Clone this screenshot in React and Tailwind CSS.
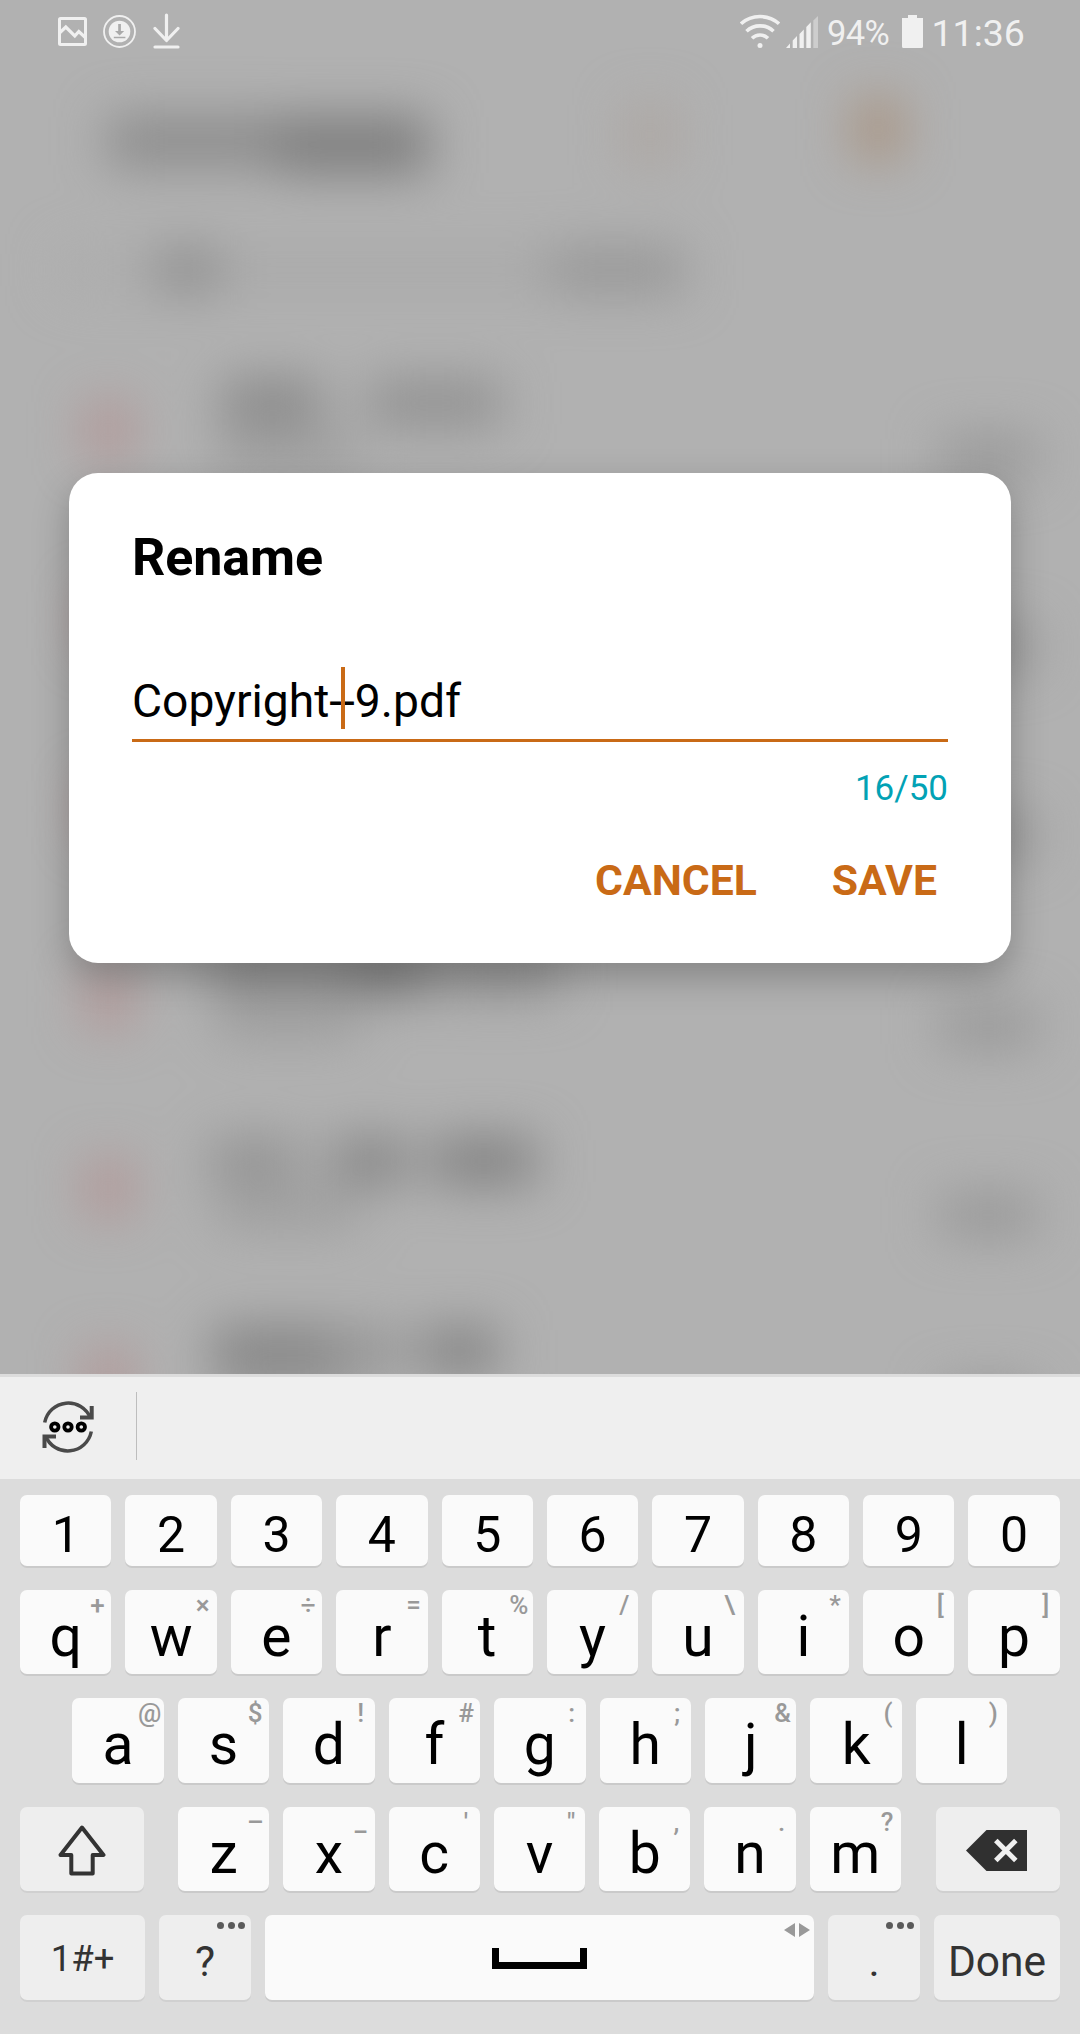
const DIGITS = ['1', '2', '3', '4', '5', '6', '7', '8', '9', '0'];
const TOP_ROW = [['q', '+'], ['w', '×'], ['e', '÷'], ['r', '='], ['t', '%'], ['y', '/'], ['u', '\\'], ['i', '*'], ['o', '['], ['p', ']']];
const HOME_ROW = [['a', '@'], ['s', '$'], ['d', '!'], ['f', '#'], ['g', ':'], ['h', ';'], ['j', '&'], ['k', '('], ['l', ')']];
const BOTTOM_ROW = [['z', '–'], ['x', '_'], ['c', "'"], ['v', '"'], ['b', ','], ['n', '.'], ['m', '?']];

// Word shades of each file name in the list behind the dialog: [left gap, width, colour]
const FILES = [
  [[4, 100, '#888888'], [46, 134, '#909090']],
  [[0, 100, '#8c8c8c'], [50, 118, '#949494']],
  [[0, 330, '#8c8c8c']],
  [[-8, 138, '#8c8c8c'], [0, 80, '#7a7a7a'], [10, 120, '#929292']],
  [[-8, 90, '#929292'], [32, 76, '#858585'], [24, 104, '#808080']],
  [[-6, 120, '#828282'], [0, 70, '#959595'], [20, 76, '#828282']],
];

function StatusBar() {
  return (
    <div className="relative flex h-[62px] items-start pl-[58px] text-[#f0f0f0]">
      <svg className="mt-[17px] h-[29px] w-[29px]" viewBox="0 0 29 29" fill="none" stroke="currentColor" strokeWidth="3">
        <rect x="1.5" y="1.5" width="26" height="26" rx="1" />
        <path d="M2 15.5 7.8 10l9 9 4-4.500 6.500 6" strokeWidth="3.200" />
      </svg>
      <svg className="ml-4 mt-[15px] h-[33px] w-[33px]" viewBox="0 0 33 33">
        <circle cx="16.500" cy="16.500" r="15.500" fill="none" stroke="currentColor" strokeWidth="1.800" />
        <circle cx="16.500" cy="16.500" r="10.800" fill="currentColor" />
        <path d="M15.200 9h2.700v7h3.300l-4.600 4.600L12 16h3.200zM10.800 21.800h11.600v1.500H10.800z" fill="#aaaaaa" />
      </svg>
      <svg className="ml-[17px] mt-[13px] h-9 w-[27px]" viewBox="0 0 27 36" fill="none" stroke="currentColor" strokeWidth="3.200" strokeLinecap="round" strokeLinejoin="round">
        <path d="M13.500 2v25M2 15.500l11.500 12 11.500-12M2 34h23" />
      </svg>
      <svg className="ml-[560px] mt-[14px] h-[35px] w-10" viewBox="0 0 40 35" fill="none" stroke="currentColor" strokeWidth="3.600">
        <path d="M1 9.800c10.500-9.700 27.500-9.700 38 0" />
        <path d="M6.500 17.300c7.500-7.300 19.500-7.300 27 0" />
        <path d="M12 24.300c4.500-4.400 11.500-4.400 16 0" />
        <circle cx="20" cy="31.500" r="2.500" fill="currentColor" stroke="none" />
      </svg>
      <svg className="ml-[6px] mt-4 h-8 w-8" viewBox="0 0 32 32" fill="currentColor">
        <path d="M0 32l4-4.500V32zM6.700 32v-7.500l4.300-4.500v12zM13.500 32V18l4.300-4.500V32zM20.300 32V11l4.500-4.700V32z" />
        <path d="M27.300 32V4.500L32 0v32z" opacity=".45" />
      </svg>
      <span className="ml-[9px] mt-[12px] text-[34.500px] leading-[42px] tracking-[-0.6px]">94%</span>
      <svg className="absolute left-[902px] top-[15px] h-[33px] w-[21px]" viewBox="0 0 21 33" fill="currentColor">
        <path d="M6 0h9v3h6v28.500a1.500 1.500 0 0 1-1.500 1.500h-18A1.500 1.500 0 0 1 0 31.500V3h6z" />
      </svg>
      <span className="absolute left-[931.500px] top-[12px] text-[37.500px] leading-[42px]">11:36</span>
    </div>
  );
}

function BlurredList() {
  return (
    <div className="absolute inset-0 overflow-hidden">
      <div className="flex h-full w-full flex-col blur-[25px]">
        <div className="mt-[103px] flex h-[76px] items-center pl-[108px]">
          <div className="h-[50px] w-[169px] bg-[#8b8b8b]" />
          <div className="mt-2 h-[56px] w-[152px] bg-[#7c7c7c]" />
          <div className="-mt-3 ml-[198px] h-[60px] w-[46px] bg-[#ada6a1]" />
          <div className="-mt-6 ml-[182px] h-[60px] w-[46px] bg-[#a8927f]" />
        </div>
        <div className="mt-[61px] flex h-[60px] items-center pl-[60px]">
          <div className="h-[40px] w-[95px] bg-[#adadad]" />
          <div className="h-[44px] w-[64px] bg-[#8e8e8e]" />
          <div className="h-[36px] w-[225px] bg-[#a9a9a9]" />
          <div className="h-[36px] w-[106px] bg-[#a9a9a9]" />
          <div className="h-[44px] w-[134px] bg-[#969696]" />
        </div>
        <div className="mt-[36px] flex flex-col">
          {FILES.map((words, i) => (
            <div key={i} className="flex h-[189.500px] shrink-0 items-start">
              <div className="ml-[86px] mt-[66px] h-[56px] w-[44px] bg-[#b29595]" />
              <div className="ml-[88px] mt-[44px] flex w-[680px] flex-col">
                <div className="flex h-[46px]">
                  {words.map(([gap, width, color], j) => (
                    <div key={j} className="h-full" style={{ marginLeft: gap, width, backgroundColor: color }} />
                  ))}
                </div>
                <div className="mt-3 h-[30px] w-[140px] bg-[#9a9a9a]" />
              </div>
              <div className="ml-[42px] mt-[100px] h-[42px] w-[96px] bg-[#979797]" />
            </div>
          ))}
        </div>
      </div>
    </div>
  );
}

function Dialog() {
  return (
    <div className="relative ml-[69px] mt-[411px] flex h-[490px] w-[942px] flex-col rounded-[29px] bg-white pl-[63px] pr-[63px] pt-[55px] shadow-[0_14px_36px_rgba(0,0,0,0.25)]">
      <h1 className="text-[52px] font-bold leading-[60px] tracking-[-0.1px] text-black">Rename</h1>
      <div className="relative mt-[82px] h-[72px] w-[816px] border-b-[3px] border-[#c96a16] text-[46.200px] leading-[62px] text-black">
        <span>Copyright--9.pdf</span>
        <span className="absolute left-[209px] top-[-3px] h-[62px] w-1 bg-[#c96a16]" />
      </div>
      <div className="mt-[26px] text-right text-[35px] leading-[42px] text-[#02a2b5]">16/50</div>
      <div className="mt-[40px] flex justify-end gap-[75px] pr-[11px] text-[42.700px] font-bold leading-[60px] text-[#c96a16]">
        <button>CANCEL</button>
        <button>SAVE</button>
      </div>
    </div>
  );
}

function LetterKey({ letter, hint }) {
  return (
    <div className="relative h-full flex-1 rounded-[7px] bg-[#fafafa] text-center text-[57px] leading-[93px] text-black shadow-[0_2px_0_#cacaca]">
      {letter}
      <span className="absolute right-0 top-0 w-7 text-[26px] font-medium leading-[30px] text-[#999999]">{hint}</span>
    </div>
  );
}

function Dots() {
  return (
    <div className="absolute right-[6px] top-[7px] flex gap-[3.500px]">
      <i className="h-[7px] w-[7px] rounded-full bg-[#5a5a5a]" />
      <i className="h-[7px] w-[7px] rounded-full bg-[#5a5a5a]" />
      <i className="h-[7px] w-[7px] rounded-full bg-[#5a5a5a]" />
    </div>
  );
}

function Keyboard() {
  return (
    <div className="relative mt-[411px] flex h-[660px] flex-col border-t-[3px] border-[#dcdcdc] bg-[#dcdcdc]">
      <div className="flex h-[102px] shrink-0 bg-[#efefef]">
        <svg className="ml-[41px] mt-[23px] h-[54px] w-[54px]" viewBox="0 0 54 54" fill="none">
          <g stroke="#4a4a4a" strokeWidth="3.500">
            <path d="M3.700 22.500A24 24 0 0 1 49.500 18" />
            <path d="M50.700 6v11.500H39" strokeWidth="4" />
            <path d="M50.300 31.500A24 24 0 0 1 4.500 36" />
            <path d="M3.500 48V36.500H15" strokeWidth="4" />
          </g>
          <g stroke="#000" strokeWidth="3.800">
            <circle cx="13.800" cy="27" r="3.700" />
            <circle cx="27" cy="27" r="3.700" />
            <circle cx="40.300" cy="27" r="3.700" />
          </g>
        </svg>
        <div className="ml-[41px] mt-[15px] h-[68px] w-px bg-[#bdbdbd]" />
      </div>
      <div className="mt-4 flex h-[71px] gap-[14px] pl-5 pr-[20.300px]">
        {DIGITS.map((d) => (
          <div key={d} className="flex-1 rounded-[7px] bg-[#fafafa] text-center text-[50px] leading-[80px] text-black shadow-[0_2px_0_#cacaca]">{d}</div>
        ))}
      </div>
      <div className="mt-6 flex h-[84px] gap-[14px] pl-5 pr-[20.300px]">
        {TOP_ROW.map(([l, h]) => <LetterKey key={l} letter={l} hint={h} />)}
      </div>
      <div className="mt-6 flex h-[85px] gap-[14px] pl-[72.300px] pr-[72.700px]">
        {HOME_ROW.map(([l, h]) => <LetterKey key={l} letter={l} hint={h} />)}
      </div>
      <div className="mt-6 flex h-[84px] px-5">
        <div className="flex w-[124px] justify-center rounded-[7px] bg-[#eeeeee] shadow-[0_2px_0_#d0d0d0]">
          <svg className="mt-[17px] h-[52px] w-[48px]" viewBox="0 0 48 52" fill="none" stroke="#333333" strokeWidth="4" strokeLinejoin="round">
            <path d="M24 3.500 45.500 31H34.700v18.500H13.300V31H2.500z" />
          </svg>
        </div>
        <div className="ml-[34px] flex w-[723px] gap-[14px]">
          {BOTTOM_ROW.map(([l, h]) => <LetterKey key={l} letter={l} hint={h} />)}
        </div>
        <div className="ml-[35px] flex w-[124px] rounded-[7px] bg-[#eeeeee] shadow-[0_2px_0_#d0d0d0]">
          <svg className="ml-[30px] mt-[23px] h-[41px] w-[61px]" viewBox="0 0 61 41">
            <path d="M0 20.500 20.500 0H61v41H20.500z" fill="#303030" />
            <path d="M29.800 10.500l20 20M49.800 10.500l-20 20" stroke="#f0f0f0" strokeWidth="5" />
          </svg>
        </div>
      </div>
      <div className="mt-6 flex h-[85px] gap-[14px] px-5 text-center text-[42.500px] leading-[93px] text-[#333333]">
        <div className="w-[125px] rounded-[7px] bg-[#eeeeee] text-[36.500px] leading-[87px] shadow-[0_2px_0_#d0d0d0]">1#+</div>
        <div className="relative w-[92px] rounded-[7px] bg-[#eeeeee] shadow-[0_2px_0_#d0d0d0]">?<Dots /></div>
        <div className="relative flex flex-1 justify-center rounded-[7px] bg-[#fafafa] shadow-[0_2px_0_#cacaca]">
          <div className="mt-[33px] h-[21px] w-[95px] border-x-[7px] border-b-[7px] border-black" />
          <svg className="absolute right-[4px] top-[8px] h-[14px] w-[26px]" viewBox="0 0 26 14" fill="#999999">
            <path d="M11 0v14L0 7zM15 0v14l11-7z" />
          </svg>
        </div>
        <div className="relative w-[92px] rounded-[7px] bg-[#eeeeee] shadow-[0_2px_0_#d0d0d0]">.<Dots /></div>
        <div className="w-[126px] rounded-[7px] bg-[#eeeeee] shadow-[0_2px_0_#d0d0d0]">Done</div>
      </div>
    </div>
  );
}

export default function App() {
  return (
    <div className="relative h-[2034px] w-[1080px] overflow-hidden bg-[#b1b1b1] font-['Roboto',sans-serif]">
      <BlurredList />
      <StatusBar />
      <Dialog />
      <Keyboard />
    </div>
  );
}
